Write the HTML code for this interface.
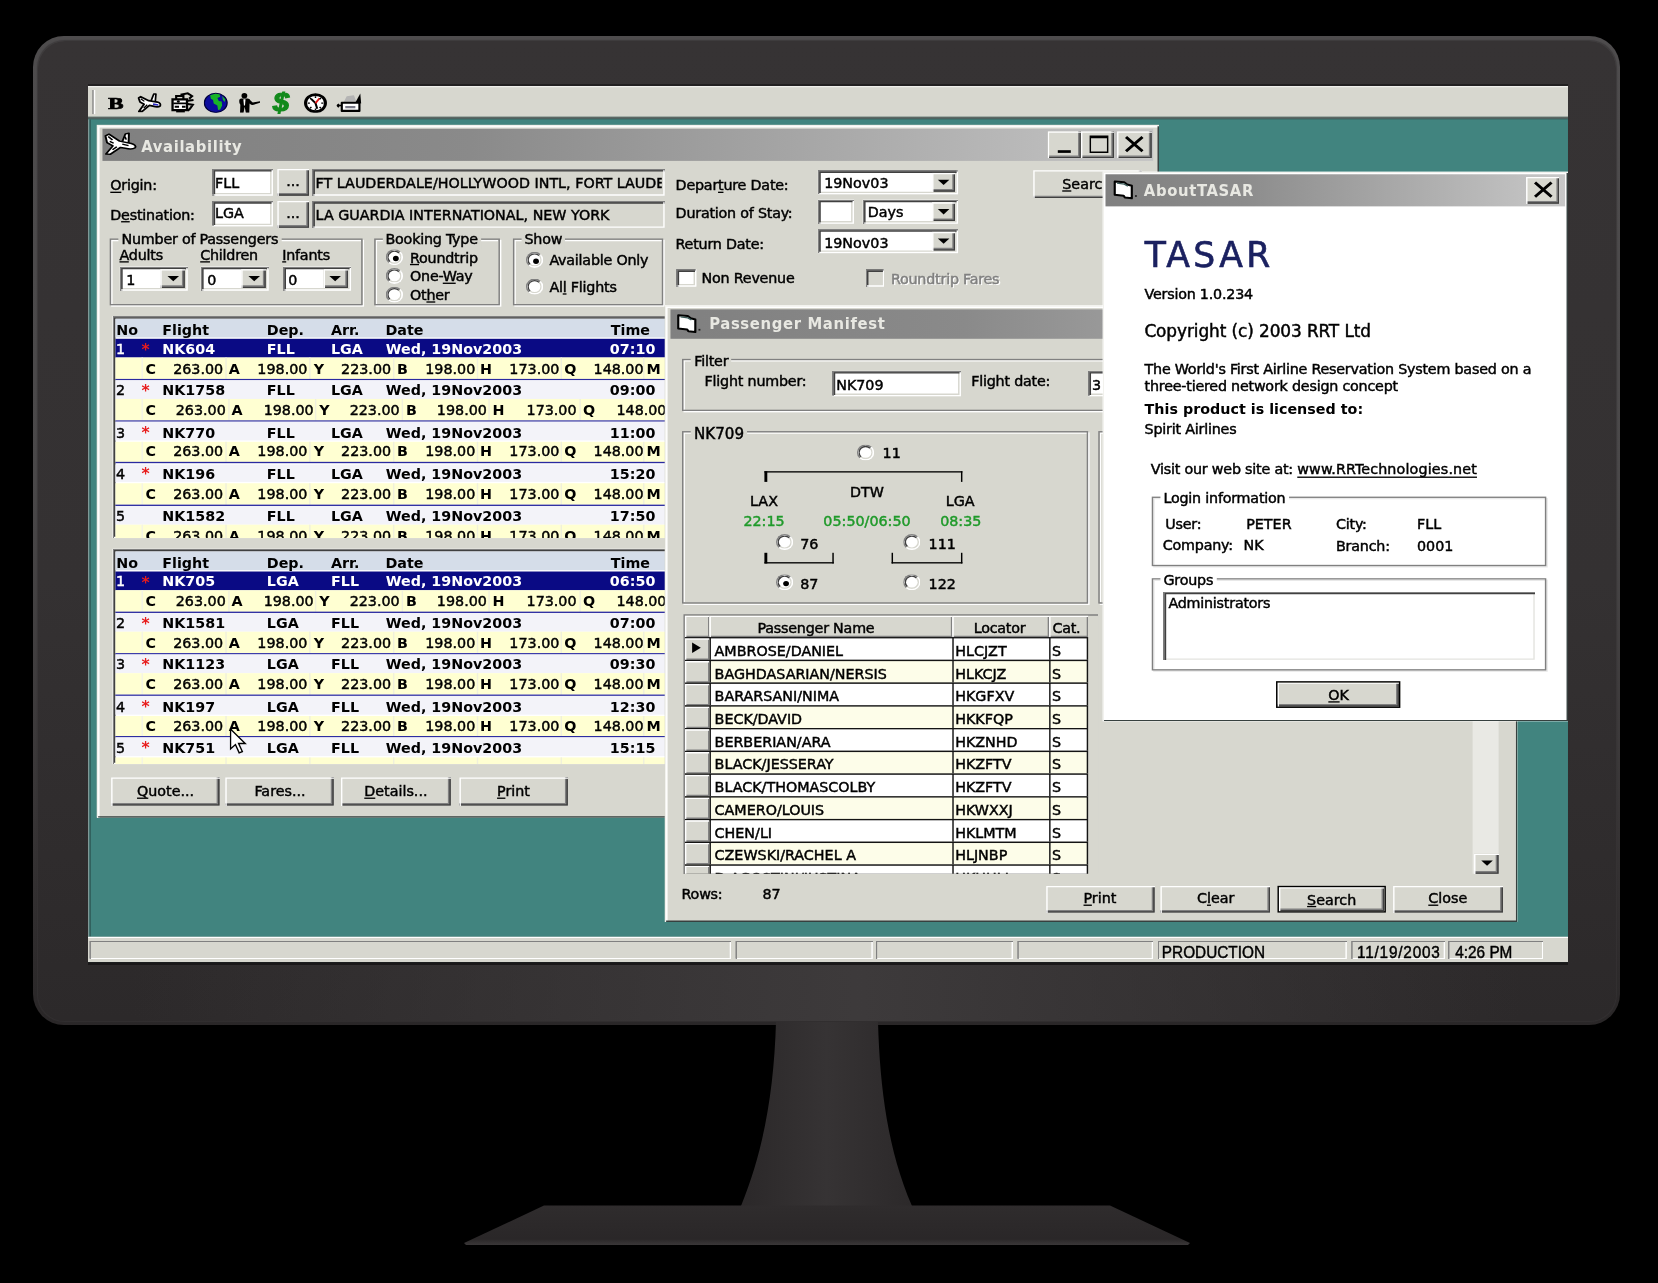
<!DOCTYPE html>
<html lang="en"><head><meta charset="utf-8"><title>TASAR</title>
<style>
html,body{margin:0;padding:0;background:#000;}
body{width:1658px;height:1283px;position:relative;overflow:hidden;font-family:"DejaVu Sans Condensed","DejaVu Sans","Liberation Sans",sans-serif;}
#rim{position:absolute;left:33px;top:36px;width:1587px;height:989px;border-radius:31px;
 background:linear-gradient(180deg,#4e4c4d 0%,#4a4849 45%,#3a3738 75%,#2a2728 100%);}
#bezel{position:absolute;left:37.5px;top:40.5px;width:1578px;height:980px;border-radius:27px;
 background:linear-gradient(180deg,#363334 0%,#343132 55%,#2c292a 100%);box-shadow:0 0 1px 0.5px rgba(54,51,52,0.7);}
#bglow{position:absolute;left:37.5px;top:962px;width:1578px;height:58.5px;border-radius:0 0 27px 27px;background:linear-gradient(90deg,rgba(60,57,58,0) 6%,rgba(60,57,58,0.55) 30%,rgba(62,59,60,0.95) 52%,rgba(60,57,58,0.55) 72%,rgba(60,57,58,0) 94%);}
#scrshadow{position:absolute;left:88px;top:83.6px;width:1480px;height:881px;background:linear-gradient(180deg,#222021 0,#222021 4px,#1a1819 4px);}
#stand{position:absolute;left:0;top:0;}
#scr{position:absolute;left:88px;top:86.4px;width:1024px;height:655px;transform:scale(1.4453,1.3375);transform-origin:0 0;overflow:hidden;background:#41847f;font-size:11px;color:#000;filter:blur(0.35px);}
#scr div{position:absolute;box-sizing:border-box;}
#scr .t{white-space:nowrap;-webkit-text-stroke:0.32px currentColor;}
#scr .btn,#scr .btnd{-webkit-text-stroke:0.32px currentColor;}
#scr .b,#scr .capt{-webkit-text-stroke:0;}
#scr u{text-decoration:underline;text-underline-offset:1px;text-decoration-thickness:1px;}
.face{background:#d7d7cf;}
.win{background:#d7d7cf;box-shadow:inset 1px 1px 0 #f2f2ee,inset -1px -1px 0 #36403f,inset 2px 2px 0 #fff;}
.btn{background:#d7d7cf;box-shadow:inset 1px 1px 0 #fff,inset -1px -1px 0 #404040,inset -2px -2px 0 #808080;text-align:center;white-space:nowrap;}
.btnd{background:#d7d7cf;border:1px solid #000;box-shadow:inset 1px 1px 0 #fff,inset -1px -1px 0 #404040,inset -2px -2px 0 #808080;text-align:center;white-space:nowrap;}
.sunk{background:#fff;box-shadow:inset 1px 1px 0 #808080,inset -1px -1px 0 #fff,inset 2px 2px 0 #404040,inset -2px -2px 0 #d7d7cf;}
.sunkf{background:#d7d7cf;box-shadow:inset 1px 1px 0 #808080,inset -1px -1px 0 #fff,inset 2px 2px 0 #404040,inset -2px -2px 0 #d7d7cf;}
.grp{border:1px solid #808080;box-shadow:1px 1px 0 #fff,inset 1px 1px 0 #fff;}
.grpw{border:1px solid #808080;box-shadow:1px 1px 0 #e8e8e8,inset 1px 1px 0 #e8e8e8;}
.lbl{background:#d7d7cf;padding:0 2px;}
.lblw{background:#fff;padding:0 2px;}
.b{font-weight:bold;}
.cap{background:linear-gradient(90deg,#808080 0%,#8a8a8a 35%,#c4c4c4 100%);}
.capt{color:#e8e8e2;font-weight:bold;font-size:11.4px;letter-spacing:0.45px;}
.radio{border-radius:50%;border:1px solid;border-color:#808080 #fff #fff #808080;background:#fff;}
.radio .ri{border-radius:50%;border:1px solid;border-color:#404040 #d7d7cf #d7d7cf #404040;background:#fff;}
.dot{border-radius:50%;background:#000;}
.arr{width:0;height:0;border-left:4px solid transparent;border-right:4px solid transparent;border-top:4.4px solid #000;}
.sp{background:#d7d7cf;box-shadow:inset 1px 1px 0 #808080,inset -1px -1px 0 #fff;}
.st{font-family:"Liberation Sans",sans-serif;font-size:11.8px;transform:scaleX(0.9);transform-origin:0 50%;}
.dis{color:#808080;text-shadow:1px 1px 0 #fff;}
.green{color:#1f9a2a;}
</style></head>
<body>
<div id="rim"></div>
<div id="bezel"></div>
<div id="bglow"></div>
<svg id="stand" width="1658" height="1283" viewBox="0 0 1658 1283">
<defs>
<linearGradient id="nk" x1="0" x2="1" y1="0" y2="0"><stop offset="0" stop-color="#2b2829"/><stop offset="0.5" stop-color="#363334"/><stop offset="1" stop-color="#2c292a"/></linearGradient>
<linearGradient id="bs" x1="0" x2="0" y1="0" y2="1"><stop offset="0" stop-color="#2f2c2d"/><stop offset="0.85" stop-color="#2a2728"/><stop offset="1" stop-color="#3a3738"/></linearGradient>
</defs>
<path d="M776,1022 L878,1022 C880,1090 888,1150 912,1206 L741,1206 C764,1150 774,1090 776,1022 Z" fill="url(#nk)"/>
<path d="M544,1205.5 L1110,1205.5 L1190,1243 L1188,1245 L466,1245 L464,1243 Z" fill="url(#bs)"/>
</svg>
<div id="scrshadow"></div>
<div id="scr">
<div class="face" style="left:0.00px;top:0.00px;width:1024.01px;height:23.03px;box-shadow:inset 0 1px 0 #eeeeea;">
</div>
<div style="left:0.00px;top:23.03px;width:1024.01px;height:2.24px;background:linear-gradient(180deg,#6a6a66,#3c5e5c);">
</div>
<div style="left:0.00px;top:25.27px;width:1.11px;height:610.24px;background:#7f9896;">
</div>
<div style="left:1.11px;top:25.27px;width:1.25px;height:610.24px;background:#2f5d5b;">
</div>
<div style="left:2.77px;top:3.44px;width:1.04px;height:17.20px;background:#808080;">
</div>
<div style="left:3.81px;top:3.44px;width:1.04px;height:17.20px;background:#fff;">
</div>
<div style="left:10.79px;top:3.89px;width:16px;height:16px;"><div class="t" style="left:3.4px;top:1px;height:16px;line-height:16px;font-family:'Liberation Serif',serif;font-weight:bold;font-size:12px;-webkit-text-stroke:0.55px #000;transform:scaleX(1.32);transform-origin:0 0;">B</div></div>
<div style="left:33.79px;top:3.89px;width:16px;height:16px;"><svg width="17" height="16" viewBox="0 0 17 16"><path d="M9.5,7.5 L11.5,2 L13,2 L12.5,8.5 Z" fill="#fff" stroke="#000" stroke-width="1.2" stroke-linejoin="round"/><path d="M1,5 L2.5,4 L8,7 L14,8 Q16.8,9 16,10.8 Q14.5,12.2 11,11 L8.5,10.5 L3.5,15 L1.2,15 L4.8,9.6 L2,8 Z" fill="#fff" stroke="#000" stroke-width="1.3" stroke-linejoin="round"/><path d="M11,9.6 L14.6,10.2" stroke="#2a2ac0" stroke-width="1.3"/><path d="M2.5,5.5 L5,7.5 M4.5,12.5 L7,10" stroke="#000" stroke-width="0.9"/></svg></div>
<div style="left:56.79px;top:3.89px;width:16px;height:16px;"><svg width="17" height="16" viewBox="0 0 17 16"><path d="M1.5,6 L11.5,6 L11.5,14 L1.5,14 Z" fill="#fff" stroke="#000" stroke-width="1.6"/><path d="M4,6 L4,3.5 L9,3.5 L9,6" fill="none" stroke="#000" stroke-width="1.5"/><path d="M7,2.5 L12,1.5 L15,3.5 L13,5.5 M12,7 L16,6.5 M12,9.5 L15.5,10 L13.5,13 L12,14.5" fill="none" stroke="#000" stroke-width="1.5"/><path d="M2,9 L11,9 M3,11.5 L6,11.5 M8,11.5 L10.5,11.5 M4,15.2 L10,15.2" stroke="#000" stroke-width="1.4"/><circle cx="5.5" cy="7.6" r="1" fill="#000"/></svg></div>
<div style="left:79.79px;top:3.89px;width:16px;height:16px;"><svg width="17" height="16" viewBox="0 0 17 16"><ellipse cx="8.4" cy="8.6" rx="7.9" ry="7.2" fill="#0c0c9c" stroke="#00003a" stroke-width="0.8"/><path d="M4.5,3 L8,1.8 L11,2.2 L11.5,4 L9.5,5 L10.5,7.2 L12.5,7.6 L12.8,10.5 L11.5,13.5 L10,14 L9.5,10.5 L7,9 L6.5,6.5 L5,5.5 Z" fill="#18b428"/><path d="M12.8,3.4 L15,6 L14.6,8 L13.4,6.4 Z" fill="#18b428"/></svg></div>
<div style="left:102.79px;top:3.89px;width:16px;height:16px;"><svg width="17" height="16" viewBox="0 0 17 16"><ellipse cx="5.2" cy="3.2" rx="2" ry="2" fill="#000"/><path d="M1.6,7 Q1.6,5.4 3.2,5.4 L7.4,5.4 Q8.8,5.4 9.6,7 L11,8.4 L16,7.4 L16,8.6 L11,10.2 Q9.8,10.2 8.8,9 L8.6,16 L6.2,16 L5.4,11.5 L4.6,16 L2.2,16 L2.4,10 Q1.6,9.4 1.6,7 Z" fill="#000"/><path d="M4.5,6 L6,6 L5.6,10.5 L4.9,10.5 Z" fill="#fff"/></svg></div>
<div style="left:125.79px;top:3.89px;width:16px;height:16px;"><div class="t" style="left:2.4px;top:-2.2px;height:22px;line-height:22px;font-family:'Liberation Sans',sans-serif;font-weight:bold;font-style:italic;font-size:18.6px;color:#128a1c;-webkit-text-stroke:0.9px #128a1c;transform:scaleX(1.08);transform-origin:0 0;">$</div></div>
<div style="left:148.79px;top:3.89px;width:16px;height:16px;"><svg width="17" height="16" viewBox="0 0 17 16"><ellipse cx="8.4" cy="8.8" rx="6.9" ry="6.4" fill="#fff" stroke="#000" stroke-width="2.1"/><path d="M8.4,8.8 L5.4,5.6 M8.4,8.8 L9.6,13" stroke="#000" stroke-width="1.4"/><path d="M8.4,8.8 L11.2,5.2" stroke="#e01818" stroke-width="1.3"/><path d="M8.4,3.6v1.4M8.4,12.8v1.4M3,8.8h1.5M12.4,8.8h1.5M4.6,5l1,0.9M12.2,5l-1,0.9M4.6,12.6l1,-0.9M12.2,12.6l-1,-0.9" stroke="#000" stroke-width="1"/></svg></div>
<div style="left:171.78px;top:3.89px;width:16px;height:16px;"><svg width="18" height="16" viewBox="0 0 18 16"><path d="M5,8 L7,3.6 L12,3 L13.6,7.6 Z" fill="#b4b4b4"/><path d="M13,8.4 L16.4,1.6 L17,9 Z" fill="#000"/><path d="M3.6,8.6 L15.8,8.6 L15.8,14.6 L3.6,14.6 Z" fill="#fff" stroke="#000" stroke-width="1.5" stroke-linejoin="round"/><path d="M0.6,10.6 L3.4,10.6 M1.6,9.4 L0.4,10.6 L1.6,11.8" stroke="#000" stroke-width="1.1" fill="none"/><path d="M6,11.8 L13,11.8" stroke="#7a7a88" stroke-width="1.6"/></svg></div>
<div class="win" style="left:6.23px;top:28.86px;width:734.80px;height:518.50px;">
</div>
<div class="cap" style="left:10.38px;top:32.45px;width:726.49px;height:23.33px;">
</div>
<div style="left:11.21px;top:34.39px;width:23px;height:18px;"><svg width="23" height="18" viewBox="0 0 17 16" preserveAspectRatio="none"><path d="M9.2,7.5 L11,1.6 L12.8,1.2 L12.6,8.5 Z" fill="#fff" stroke="#000" stroke-width="1" stroke-linejoin="round"/><path d="M0.8,3 L2.6,1.8 L8,6.4 L14,8 Q16.8,9 16,10.8 Q14.5,12.2 11,11.2 L8.5,10.6 L3.2,15.2 L1,15 L4.6,9.6 L1.6,7.4 Z" fill="#fff" stroke="#000" stroke-width="1" stroke-linejoin="round"/><path d="M2.2,3.4 L4.4,5.6 M3,6.6 L5,7.8 M4.4,12.2 L6.6,10.2 M10.8,3.4 L11.4,5.4 M9.4,8.4 L12.6,9.4" stroke="#000" stroke-width="0.9"/></svg></div>
<div class="t capt" style="left:36.81px;top:36.64px;height:16px;line-height:16px;">Availability</div>
<div class="btn" style="left:664.36px;top:34.24px;width:22.69px;height:19.44px;">
<div style="left:7px;top:13.5px;width:9px;height:2.4px;background:#000;"></div>
</div>
<div class="btn" style="left:687.33px;top:34.24px;width:22.97px;height:19.44px;">
<div style="left:5.5px;top:3px;width:13px;height:13px;border:1.2px solid #000;border-top:2.6px solid #000;"></div>
</div>
<div class="btn" style="left:712.10px;top:34.24px;width:23.66px;height:19.44px;">
<svg style="position:absolute;left:5.2px;top:3px" width="14" height="13" viewBox="0 0 14 13"><path d="M1.2,1.2 L12.6,11.8 M12.6,1.2 L1.2,11.8" stroke="#000" stroke-width="2.1"/></svg>
</div>
<div class="t" style="left:15.43px;top:67.84px;height:14px;line-height:14px;letter-spacing:-0.15px;"><u>O</u>rigin:</div>
<div class="t" style="left:15.43px;top:90.12px;height:14px;line-height:14px;letter-spacing:-0.15px;">D<u>e</u>stination:</div>
<div class="sunk" style="left:85.52px;top:62.21px;width:42.76px;height:19.44px;">
</div>
<div class="t" style="left:87.87px;top:65.90px;height:14px;line-height:14px;">FLL</div>
<div class="sunk" style="left:85.52px;top:85.98px;width:42.76px;height:19.44px;">
</div>
<div class="t" style="left:87.87px;top:89.22px;height:14px;line-height:14px;">LGA</div>
<div class="btn" style="left:130.77px;top:61.91px;width:22.28px;height:20.04px;line-height:20.84px;">
...
</div>
<div class="btn" style="left:130.77px;top:85.68px;width:22.28px;height:20.04px;line-height:20.84px;">
...
</div>
<div class="sunkf" style="left:154.99px;top:62.21px;width:243.55px;height:19.59px;">
</div>
<div style="left:156.78px;top:63.25px;width:240.09px;height:17.20px;overflow:hidden;">
<div class="t" style="left:0.69px;top:2.79px;height:14px;line-height:14px;">FT LAUDERDALE/HOLLYWOOD INTL, FORT LAUDERDALE</div>
</div>
<div class="sunkf" style="left:154.99px;top:85.98px;width:243.55px;height:19.59px;">
</div>
<div style="left:156.78px;top:87.18px;width:240.09px;height:17.20px;overflow:hidden;">
<div class="t" style="left:0.69px;top:2.35px;height:14px;line-height:14px;">LA GUARDIA INTERNATIONAL, NEW YORK</div>
</div>
<div class="grp" style="left:15.29px;top:113.79px;width:175.05px;height:49.94px;">
</div>
<div class="t lbl" style="left:21.17px;top:108.07px;height:14px;line-height:14px;letter-spacing:-0.15px;">Number of Passengers</div>
<div class="t" style="left:21.79px;top:120.03px;height:14px;line-height:14px;letter-spacing:-0.15px;"><u>A</u>dults</div>
<div class="t" style="left:77.63px;top:120.03px;height:14px;line-height:14px;letter-spacing:-0.15px;"><u>C</u>hildren</div>
<div class="t" style="left:134.37px;top:120.03px;height:14px;line-height:14px;letter-spacing:-0.15px;"><u>I</u>nfants</div>
<div class="sunk" style="left:22.42px;top:135.48px;width:46.91px;height:17.64px;">
<div class="t" style="left:4px;top:2.3px;height:15.64px;line-height:15.64px;">1</div>
<div class="btn" style="left:27.96px;top:2px;width:16.95px;height:13.64px;"><div class="arr" style="left:4.48px;top:4.82px;"></div></div>
</div>
<div class="sunk" style="left:78.46px;top:135.48px;width:46.91px;height:17.64px;">
<div class="t" style="left:4px;top:2.3px;height:15.64px;line-height:15.64px;">0</div>
<div class="btn" style="left:27.96px;top:2px;width:16.95px;height:13.64px;"><div class="arr" style="left:4.48px;top:4.82px;"></div></div>
</div>
<div class="sunk" style="left:134.64px;top:135.48px;width:46.91px;height:17.64px;">
<div class="t" style="left:4px;top:2.3px;height:15.64px;line-height:15.64px;">0</div>
<div class="btn" style="left:27.96px;top:2px;width:16.95px;height:13.64px;"><div class="arr" style="left:4.48px;top:4.82px;"></div></div>
</div>
<div class="grp" style="left:197.54px;top:113.79px;width:87.80px;height:49.94px;">
</div>
<div class="t lbl" style="left:203.83px;top:108.07px;height:14px;line-height:14px;letter-spacing:-0.15px;">Booking Type</div>
<div class="radio " style="left:206.00px;top:121.55px;width:12px;height:12px;"><div class="ri" style="left:0;top:0;width:10px;height:10px;"><div class="dot" style="left:3px;top:3px;width:4px;height:4px;"></div></div></div>
<div class="radio " style="left:206.00px;top:135.61px;width:12px;height:12px;"><div class="ri" style="left:0;top:0;width:10px;height:10px;"></div></div>
<div class="radio " style="left:206.00px;top:149.66px;width:12px;height:12px;"><div class="ri" style="left:0;top:0;width:10px;height:10px;"></div></div>
<div class="t" style="left:222.79px;top:121.67px;height:14px;line-height:14px;letter-spacing:-0.15px;"><u>R</u>oundtrip</div>
<div class="t" style="left:222.79px;top:135.73px;height:14px;line-height:14px;letter-spacing:-0.15px;">One-<u>W</u>ay</div>
<div class="t" style="left:222.79px;top:149.79px;height:14px;line-height:14px;letter-spacing:-0.15px;">Ot<u>h</u>er</div>
<div class="grp" style="left:293.78px;top:113.79px;width:104.61px;height:49.94px;">
</div>
<div class="t lbl" style="left:300.01px;top:108.07px;height:14px;line-height:14px;letter-spacing:-0.15px;">Show</div>
<div class="radio " style="left:302.86px;top:124.24px;width:12px;height:12px;"><div class="ri" style="left:0;top:0;width:10px;height:10px;"><div class="dot" style="left:3px;top:3px;width:4px;height:4px;"></div></div></div>
<div class="radio " style="left:302.86px;top:144.13px;width:12px;height:12px;"><div class="ri" style="left:0;top:0;width:10px;height:10px;"></div></div>
<div class="t" style="left:319.24px;top:124.07px;height:14px;line-height:14px;letter-spacing:-0.15px;">Available Only</div>
<div class="t" style="left:319.24px;top:143.95px;height:14px;line-height:14px;letter-spacing:-0.15px;">Al<u>l</u> Flights</div>
<div class="t" style="left:406.56px;top:67.84px;height:14px;line-height:14px;letter-spacing:-0.15px;">Depar<u>t</u>ure Date:</div>
<div class="t" style="left:406.56px;top:89.37px;height:14px;line-height:14px;letter-spacing:-0.15px;">Duration of Stay:</div>
<div class="t" style="left:406.56px;top:111.65px;height:14px;line-height:14px;letter-spacing:-0.15px;">Return Date:</div>
<div class="sunk" style="left:505.36px;top:62.65px;width:96.59px;height:18.09px;">
<div class="t" style="left:4px;top:2.3px;height:16.09px;line-height:16.09px;">19Nov03</div>
<div class="btn" style="left:78.68px;top:2px;width:15.91px;height:14.09px;"><div class="arr" style="left:3.96px;top:5.05px;"></div></div>
</div>
<div class="sunk" style="left:505.36px;top:84.93px;width:24.22px;height:17.94px;">
</div>
<div class="sunk" style="left:535.53px;top:84.93px;width:66.42px;height:17.94px;">
<div class="t" style="left:4px;top:2.3px;height:15.94px;line-height:15.94px;">Days</div>
<div class="btn" style="left:48.51px;top:2px;width:15.91px;height:13.94px;"><div class="arr" style="left:3.96px;top:4.97px;"></div></div>
</div>
<div class="sunk" style="left:505.36px;top:107.21px;width:96.59px;height:18.09px;">
<div class="t" style="left:4px;top:2.3px;height:16.09px;line-height:16.09px;">19Nov03</div>
<div class="btn" style="left:78.68px;top:2px;width:15.91px;height:14.09px;"><div class="arr" style="left:3.96px;top:5.05px;"></div></div>
</div>
<div class="sunk" style="left:407.39px;top:136.82px;width:13.15px;height:13.01px;">
</div>
<div class="t" style="left:424.55px;top:137.37px;height:14px;line-height:14px;letter-spacing:-0.15px;">Non Revenue</div>
<div class="sunkf" style="left:538.30px;top:136.82px;width:13.15px;height:13.01px;">
</div>
<div class="t dis" style="left:555.59px;top:137.52px;height:14px;line-height:14px;letter-spacing:-0.15px;">Roundtrip Fares</div>
<div class="btn" style="left:653.57px;top:62.50px;width:75.00px;height:21.08px;line-height:21.88px;">
<u>S</u>earch
</div>
<div class="sunk" style="left:17.16px;top:172.11px;width:648.45px;height:165.83px;overflow:hidden;">
<div style="left:2.01px;top:2.17px;width:691.90px;height:14.21px;background:#d5dde9;">
</div>
<div class="t b" style="left:2.35px;top:3.99px;height:14px;line-height:14px;">No</div>
<div class="t b" style="left:34.25px;top:3.99px;height:14px;line-height:14px;">Flight</div>
<div class="t b" style="left:106.55px;top:3.99px;height:14px;line-height:14px;">Dep.</div>
<div class="t b" style="left:150.97px;top:3.99px;height:14px;line-height:14px;">Arr.</div>
<div class="t b" style="left:188.68px;top:3.99px;height:14px;line-height:14px;">Date</div>
<div class="t b" style="left:344.57px;top:3.99px;height:14px;line-height:14px;">Time</div>
<div style="left:2.01px;top:16.82px;width:691.90px;height:13.91px;background:#0a0a84;">
</div>
<div class="t" style="left:2.21px;top:18.12px;height:14px;line-height:14px;color:#fff;">1</div>
<div class="t b" style="left:19.93px;top:17.67px;height:14px;line-height:14px;color:#e81c1c;font-size:12px;">*</div>
<div class="t b" style="left:34.25px;top:18.12px;height:14px;line-height:14px;color:#fff;">NK604</div>
<div class="t b" style="left:106.55px;top:18.12px;height:14px;line-height:14px;color:#fff;">FLL</div>
<div class="t b" style="left:150.97px;top:18.12px;height:14px;line-height:14px;color:#fff;">LGA</div>
<div class="t b" style="left:188.89px;top:18.12px;height:14px;line-height:14px;color:#fff;">Wed, 19Nov2003</div>
<div class="t b" style="left:75.42px;width:300px;text-align:right;top:18.12px;height:14px;line-height:14px;color:#fff;">07:10</div>
<div style="left:2.01px;top:31.18px;width:691.90px;height:15.72px;background:#ffffd2;">
</div>
<div style="left:19.72px;top:31.18px;width:0.90px;height:15.72px;background:#f4f4e6;">
</div>
<div style="left:77.56px;top:31.18px;width:0.83px;height:15.72px;background:#f0f0dc;">
</div>
<div style="left:136.30px;top:31.18px;width:0.83px;height:15.72px;background:#f0f0dc;">
</div>
<div style="left:194.01px;top:31.18px;width:0.83px;height:15.72px;background:#f0f0dc;">
</div>
<div style="left:251.44px;top:31.18px;width:0.83px;height:15.72px;background:#f0f0dc;">
</div>
<div style="left:309.69px;top:31.18px;width:0.83px;height:15.72px;background:#f0f0dc;">
</div>
<div style="left:366.64px;top:31.18px;width:0.83px;height:15.72px;background:#f0f0dc;">
</div>
<div class="t b" style="left:22.56px;top:32.93px;height:14px;line-height:14px;">C</div>
<div class="t" style="left:-223.61px;width:300px;text-align:right;top:32.93px;height:14px;line-height:14px;">263.00</div>
<div class="t b" style="left:80.26px;top:32.93px;height:14px;line-height:14px;">A</div>
<div class="t" style="left:-165.36px;width:300px;text-align:right;top:32.93px;height:14px;line-height:14px;">198.00</div>
<div class="t b" style="left:139.00px;top:32.93px;height:14px;line-height:14px;">Y</div>
<div class="t" style="left:-107.44px;width:300px;text-align:right;top:32.93px;height:14px;line-height:14px;">223.00</div>
<div class="t b" style="left:196.71px;top:32.93px;height:14px;line-height:14px;">B</div>
<div class="t" style="left:-49.19px;width:300px;text-align:right;top:32.93px;height:14px;line-height:14px;">198.00</div>
<div class="t b" style="left:254.13px;top:32.93px;height:14px;line-height:14px;">H</div>
<div class="t" style="left:9.00px;width:300px;text-align:right;top:32.93px;height:14px;line-height:14px;">173.00</div>
<div class="t b" style="left:312.39px;top:32.93px;height:14px;line-height:14px;">Q</div>
<div class="t" style="left:67.26px;width:300px;text-align:right;top:32.93px;height:14px;line-height:14px;">148.00</div>
<div class="t b" style="left:369.34px;top:32.93px;height:14px;line-height:14px;">M</div>
<div class="t" style="left:124.96px;width:300px;text-align:right;top:32.93px;height:14px;line-height:14px;">148.00</div>
<div style="left:2.01px;top:46.89px;width:691.90px;height:0.97px;background:#2a2aa0;">
</div>
<div style="left:2.01px;top:48.01px;width:691.90px;height:13.91px;background:#f3f3f9;">
</div>
<div class="t" style="left:2.21px;top:49.31px;height:14px;line-height:14px;">2</div>
<div class="t b" style="left:19.93px;top:48.87px;height:14px;line-height:14px;color:#e81c1c;font-size:12px;">*</div>
<div class="t b" style="left:34.25px;top:49.31px;height:14px;line-height:14px;">NK1758</div>
<div class="t b" style="left:106.55px;top:49.31px;height:14px;line-height:14px;">FLL</div>
<div class="t b" style="left:150.97px;top:49.31px;height:14px;line-height:14px;">LGA</div>
<div class="t b" style="left:188.89px;top:49.31px;height:14px;line-height:14px;">Wed, 19Nov2003</div>
<div class="t b" style="left:75.42px;width:300px;text-align:right;top:49.31px;height:14px;line-height:14px;">09:00</div>
<div style="left:2.01px;top:62.37px;width:691.90px;height:15.72px;background:#ffffd2;">
</div>
<div style="left:19.72px;top:62.37px;width:0.90px;height:15.72px;background:#f4f4e6;">
</div>
<div style="left:79.43px;top:62.37px;width:0.83px;height:15.72px;background:#f0f0dc;">
</div>
<div style="left:140.18px;top:62.37px;width:0.83px;height:15.72px;background:#f0f0dc;">
</div>
<div style="left:200.24px;top:62.37px;width:0.83px;height:15.72px;background:#f0f0dc;">
</div>
<div style="left:260.02px;top:62.37px;width:0.83px;height:15.72px;background:#f0f0dc;">
</div>
<div style="left:322.63px;top:62.37px;width:0.83px;height:15.72px;background:#f0f0dc;">
</div>
<div style="left:383.52px;top:62.37px;width:0.83px;height:15.72px;background:#f0f0dc;">
</div>
<div class="t b" style="left:22.56px;top:64.13px;height:14px;line-height:14px;">C</div>
<div class="t" style="left:-221.82px;width:300px;text-align:right;top:64.13px;height:14px;line-height:14px;">263.00</div>
<div class="t b" style="left:82.13px;top:64.13px;height:14px;line-height:14px;">A</div>
<div class="t" style="left:-161.00px;width:300px;text-align:right;top:64.13px;height:14px;line-height:14px;">198.00</div>
<div class="t b" style="left:142.88px;top:64.13px;height:14px;line-height:14px;">Y</div>
<div class="t" style="left:-101.49px;width:300px;text-align:right;top:64.13px;height:14px;line-height:14px;">223.00</div>
<div class="t b" style="left:202.93px;top:64.13px;height:14px;line-height:14px;">B</div>
<div class="t" style="left:-41.16px;width:300px;text-align:right;top:64.13px;height:14px;line-height:14px;">198.00</div>
<div class="t b" style="left:262.71px;top:64.13px;height:14px;line-height:14px;">H</div>
<div class="t" style="left:20.90px;width:300px;text-align:right;top:64.13px;height:14px;line-height:14px;">173.00</div>
<div class="t b" style="left:325.33px;top:64.13px;height:14px;line-height:14px;">Q</div>
<div class="t" style="left:83.10px;width:300px;text-align:right;top:64.13px;height:14px;line-height:14px;">148.00</div>
<div class="t b" style="left:386.22px;top:64.13px;height:14px;line-height:14px;">M</div>
<div class="t" style="left:144.34px;width:300px;text-align:right;top:64.13px;height:14px;line-height:14px;">148.00</div>
<div style="left:2.01px;top:78.09px;width:691.90px;height:0.97px;background:#2a2aa0;">
</div>
<div style="left:2.01px;top:79.21px;width:691.90px;height:13.91px;background:#f3f3f9;">
</div>
<div class="t" style="left:2.21px;top:80.51px;height:14px;line-height:14px;">3</div>
<div class="t b" style="left:19.93px;top:80.06px;height:14px;line-height:14px;color:#e81c1c;font-size:12px;">*</div>
<div class="t b" style="left:34.25px;top:80.51px;height:14px;line-height:14px;">NK770</div>
<div class="t b" style="left:106.55px;top:80.51px;height:14px;line-height:14px;">FLL</div>
<div class="t b" style="left:150.97px;top:80.51px;height:14px;line-height:14px;">LGA</div>
<div class="t b" style="left:188.89px;top:80.51px;height:14px;line-height:14px;">Wed, 19Nov2003</div>
<div class="t b" style="left:75.42px;width:300px;text-align:right;top:80.51px;height:14px;line-height:14px;">11:00</div>
<div style="left:2.01px;top:93.56px;width:691.90px;height:15.72px;background:#ffffd2;">
</div>
<div style="left:19.72px;top:93.56px;width:0.90px;height:15.72px;background:#f4f4e6;">
</div>
<div style="left:77.56px;top:93.56px;width:0.83px;height:15.72px;background:#f0f0dc;">
</div>
<div style="left:136.30px;top:93.56px;width:0.83px;height:15.72px;background:#f0f0dc;">
</div>
<div style="left:194.01px;top:93.56px;width:0.83px;height:15.72px;background:#f0f0dc;">
</div>
<div style="left:251.44px;top:93.56px;width:0.83px;height:15.72px;background:#f0f0dc;">
</div>
<div style="left:309.69px;top:93.56px;width:0.83px;height:15.72px;background:#f0f0dc;">
</div>
<div style="left:366.64px;top:93.56px;width:0.83px;height:15.72px;background:#f0f0dc;">
</div>
<div class="t b" style="left:22.56px;top:95.32px;height:14px;line-height:14px;">C</div>
<div class="t" style="left:-223.61px;width:300px;text-align:right;top:95.32px;height:14px;line-height:14px;">263.00</div>
<div class="t b" style="left:80.26px;top:95.32px;height:14px;line-height:14px;">A</div>
<div class="t" style="left:-165.36px;width:300px;text-align:right;top:95.32px;height:14px;line-height:14px;">198.00</div>
<div class="t b" style="left:139.00px;top:95.32px;height:14px;line-height:14px;">Y</div>
<div class="t" style="left:-107.44px;width:300px;text-align:right;top:95.32px;height:14px;line-height:14px;">223.00</div>
<div class="t b" style="left:196.71px;top:95.32px;height:14px;line-height:14px;">B</div>
<div class="t" style="left:-49.19px;width:300px;text-align:right;top:95.32px;height:14px;line-height:14px;">198.00</div>
<div class="t b" style="left:254.13px;top:95.32px;height:14px;line-height:14px;">H</div>
<div class="t" style="left:9.00px;width:300px;text-align:right;top:95.32px;height:14px;line-height:14px;">173.00</div>
<div class="t b" style="left:312.39px;top:95.32px;height:14px;line-height:14px;">Q</div>
<div class="t" style="left:67.26px;width:300px;text-align:right;top:95.32px;height:14px;line-height:14px;">148.00</div>
<div class="t b" style="left:369.34px;top:95.32px;height:14px;line-height:14px;">M</div>
<div class="t" style="left:124.96px;width:300px;text-align:right;top:95.32px;height:14px;line-height:14px;">148.00</div>
<div style="left:2.01px;top:109.28px;width:691.90px;height:0.97px;background:#2a2aa0;">
</div>
<div style="left:2.01px;top:110.40px;width:691.90px;height:13.91px;background:#f3f3f9;">
</div>
<div class="t" style="left:2.21px;top:111.70px;height:14px;line-height:14px;">4</div>
<div class="t b" style="left:19.93px;top:111.25px;height:14px;line-height:14px;color:#e81c1c;font-size:12px;">*</div>
<div class="t b" style="left:34.25px;top:111.70px;height:14px;line-height:14px;">NK196</div>
<div class="t b" style="left:106.55px;top:111.70px;height:14px;line-height:14px;">FLL</div>
<div class="t b" style="left:150.97px;top:111.70px;height:14px;line-height:14px;">LGA</div>
<div class="t b" style="left:188.89px;top:111.70px;height:14px;line-height:14px;">Wed, 19Nov2003</div>
<div class="t b" style="left:75.42px;width:300px;text-align:right;top:111.70px;height:14px;line-height:14px;">15:20</div>
<div style="left:2.01px;top:124.76px;width:691.90px;height:15.72px;background:#ffffd2;">
</div>
<div style="left:19.72px;top:124.76px;width:0.90px;height:15.72px;background:#f4f4e6;">
</div>
<div style="left:77.56px;top:124.76px;width:0.83px;height:15.72px;background:#f0f0dc;">
</div>
<div style="left:136.30px;top:124.76px;width:0.83px;height:15.72px;background:#f0f0dc;">
</div>
<div style="left:194.01px;top:124.76px;width:0.83px;height:15.72px;background:#f0f0dc;">
</div>
<div style="left:251.44px;top:124.76px;width:0.83px;height:15.72px;background:#f0f0dc;">
</div>
<div style="left:309.69px;top:124.76px;width:0.83px;height:15.72px;background:#f0f0dc;">
</div>
<div style="left:366.64px;top:124.76px;width:0.83px;height:15.72px;background:#f0f0dc;">
</div>
<div class="t b" style="left:22.56px;top:126.51px;height:14px;line-height:14px;">C</div>
<div class="t" style="left:-223.61px;width:300px;text-align:right;top:126.51px;height:14px;line-height:14px;">263.00</div>
<div class="t b" style="left:80.26px;top:126.51px;height:14px;line-height:14px;">A</div>
<div class="t" style="left:-165.36px;width:300px;text-align:right;top:126.51px;height:14px;line-height:14px;">198.00</div>
<div class="t b" style="left:139.00px;top:126.51px;height:14px;line-height:14px;">Y</div>
<div class="t" style="left:-107.44px;width:300px;text-align:right;top:126.51px;height:14px;line-height:14px;">223.00</div>
<div class="t b" style="left:196.71px;top:126.51px;height:14px;line-height:14px;">B</div>
<div class="t" style="left:-49.19px;width:300px;text-align:right;top:126.51px;height:14px;line-height:14px;">198.00</div>
<div class="t b" style="left:254.13px;top:126.51px;height:14px;line-height:14px;">H</div>
<div class="t" style="left:9.00px;width:300px;text-align:right;top:126.51px;height:14px;line-height:14px;">173.00</div>
<div class="t b" style="left:312.39px;top:126.51px;height:14px;line-height:14px;">Q</div>
<div class="t" style="left:67.26px;width:300px;text-align:right;top:126.51px;height:14px;line-height:14px;">148.00</div>
<div class="t b" style="left:369.34px;top:126.51px;height:14px;line-height:14px;">M</div>
<div class="t" style="left:124.96px;width:300px;text-align:right;top:126.51px;height:14px;line-height:14px;">148.00</div>
<div style="left:2.01px;top:140.47px;width:691.90px;height:0.97px;background:#2a2aa0;">
</div>
<div style="left:2.01px;top:141.59px;width:691.90px;height:13.91px;background:#f3f3f9;">
</div>
<div class="t" style="left:2.21px;top:142.89px;height:14px;line-height:14px;">5</div>
<div class="t b" style="left:34.25px;top:142.89px;height:14px;line-height:14px;">NK1582</div>
<div class="t b" style="left:106.55px;top:142.89px;height:14px;line-height:14px;">FLL</div>
<div class="t b" style="left:150.97px;top:142.89px;height:14px;line-height:14px;">LGA</div>
<div class="t b" style="left:188.89px;top:142.89px;height:14px;line-height:14px;">Wed, 19Nov2003</div>
<div class="t b" style="left:75.42px;width:300px;text-align:right;top:142.89px;height:14px;line-height:14px;">17:50</div>
<div style="left:2.01px;top:155.95px;width:691.90px;height:15.72px;background:#ffffd2;">
</div>
<div style="left:19.72px;top:155.95px;width:0.90px;height:15.72px;background:#f4f4e6;">
</div>
<div style="left:77.56px;top:155.95px;width:0.83px;height:15.72px;background:#f0f0dc;">
</div>
<div style="left:136.30px;top:155.95px;width:0.83px;height:15.72px;background:#f0f0dc;">
</div>
<div style="left:194.01px;top:155.95px;width:0.83px;height:15.72px;background:#f0f0dc;">
</div>
<div style="left:251.44px;top:155.95px;width:0.83px;height:15.72px;background:#f0f0dc;">
</div>
<div style="left:309.69px;top:155.95px;width:0.83px;height:15.72px;background:#f0f0dc;">
</div>
<div style="left:366.64px;top:155.95px;width:0.83px;height:15.72px;background:#f0f0dc;">
</div>
<div class="t b" style="left:22.56px;top:157.70px;height:14px;line-height:14px;">C</div>
<div class="t" style="left:-223.61px;width:300px;text-align:right;top:157.70px;height:14px;line-height:14px;">263.00</div>
<div class="t b" style="left:80.26px;top:157.70px;height:14px;line-height:14px;">A</div>
<div class="t" style="left:-165.36px;width:300px;text-align:right;top:157.70px;height:14px;line-height:14px;">198.00</div>
<div class="t b" style="left:139.00px;top:157.70px;height:14px;line-height:14px;">Y</div>
<div class="t" style="left:-107.44px;width:300px;text-align:right;top:157.70px;height:14px;line-height:14px;">223.00</div>
<div class="t b" style="left:196.71px;top:157.70px;height:14px;line-height:14px;">B</div>
<div class="t" style="left:-49.19px;width:300px;text-align:right;top:157.70px;height:14px;line-height:14px;">198.00</div>
<div class="t b" style="left:254.13px;top:157.70px;height:14px;line-height:14px;">H</div>
<div class="t" style="left:9.00px;width:300px;text-align:right;top:157.70px;height:14px;line-height:14px;">173.00</div>
<div class="t b" style="left:312.39px;top:157.70px;height:14px;line-height:14px;">Q</div>
<div class="t" style="left:67.26px;width:300px;text-align:right;top:157.70px;height:14px;line-height:14px;">148.00</div>
<div class="t b" style="left:369.34px;top:157.70px;height:14px;line-height:14px;">M</div>
<div class="t" style="left:124.96px;width:300px;text-align:right;top:157.70px;height:14px;line-height:14px;">148.00</div>
<div style="left:2.01px;top:171.66px;width:691.90px;height:0.97px;background:#2a2aa0;">
</div>
</div>
<div class="sunk" style="left:17.16px;top:345.87px;width:648.45px;height:161.20px;overflow:hidden;">
<div style="left:2.01px;top:2.17px;width:691.90px;height:14.21px;background:#d5dde9;">
</div>
<div class="t b" style="left:2.35px;top:3.99px;height:14px;line-height:14px;">No</div>
<div class="t b" style="left:34.25px;top:3.99px;height:14px;line-height:14px;">Flight</div>
<div class="t b" style="left:106.55px;top:3.99px;height:14px;line-height:14px;">Dep.</div>
<div class="t b" style="left:150.97px;top:3.99px;height:14px;line-height:14px;">Arr.</div>
<div class="t b" style="left:188.68px;top:3.99px;height:14px;line-height:14px;">Date</div>
<div class="t b" style="left:344.57px;top:3.99px;height:14px;line-height:14px;">Time</div>
<div style="left:2.01px;top:16.82px;width:691.90px;height:13.91px;background:#0a0a84;">
</div>
<div class="t" style="left:2.21px;top:18.12px;height:14px;line-height:14px;color:#fff;">1</div>
<div class="t b" style="left:19.93px;top:17.67px;height:14px;line-height:14px;color:#e81c1c;font-size:12px;">*</div>
<div class="t b" style="left:34.25px;top:18.12px;height:14px;line-height:14px;color:#fff;">NK705</div>
<div class="t b" style="left:106.55px;top:18.12px;height:14px;line-height:14px;color:#fff;">LGA</div>
<div class="t b" style="left:150.97px;top:18.12px;height:14px;line-height:14px;color:#fff;">FLL</div>
<div class="t b" style="left:188.89px;top:18.12px;height:14px;line-height:14px;color:#fff;">Wed, 19Nov2003</div>
<div class="t b" style="left:75.42px;width:300px;text-align:right;top:18.12px;height:14px;line-height:14px;color:#fff;">06:50</div>
<div style="left:2.01px;top:31.18px;width:691.90px;height:15.72px;background:#ffffd2;">
</div>
<div style="left:19.72px;top:31.18px;width:0.90px;height:15.72px;background:#f4f4e6;">
</div>
<div style="left:79.43px;top:31.18px;width:0.83px;height:15.72px;background:#f0f0dc;">
</div>
<div style="left:140.18px;top:31.18px;width:0.83px;height:15.72px;background:#f0f0dc;">
</div>
<div style="left:200.24px;top:31.18px;width:0.83px;height:15.72px;background:#f0f0dc;">
</div>
<div style="left:260.02px;top:31.18px;width:0.83px;height:15.72px;background:#f0f0dc;">
</div>
<div style="left:322.63px;top:31.18px;width:0.83px;height:15.72px;background:#f0f0dc;">
</div>
<div style="left:383.52px;top:31.18px;width:0.83px;height:15.72px;background:#f0f0dc;">
</div>
<div class="t b" style="left:22.56px;top:32.93px;height:14px;line-height:14px;">C</div>
<div class="t" style="left:-221.82px;width:300px;text-align:right;top:32.93px;height:14px;line-height:14px;">263.00</div>
<div class="t b" style="left:82.13px;top:32.93px;height:14px;line-height:14px;">A</div>
<div class="t" style="left:-161.00px;width:300px;text-align:right;top:32.93px;height:14px;line-height:14px;">198.00</div>
<div class="t b" style="left:142.88px;top:32.93px;height:14px;line-height:14px;">Y</div>
<div class="t" style="left:-101.49px;width:300px;text-align:right;top:32.93px;height:14px;line-height:14px;">223.00</div>
<div class="t b" style="left:202.93px;top:32.93px;height:14px;line-height:14px;">B</div>
<div class="t" style="left:-41.16px;width:300px;text-align:right;top:32.93px;height:14px;line-height:14px;">198.00</div>
<div class="t b" style="left:262.71px;top:32.93px;height:14px;line-height:14px;">H</div>
<div class="t" style="left:20.90px;width:300px;text-align:right;top:32.93px;height:14px;line-height:14px;">173.00</div>
<div class="t b" style="left:325.33px;top:32.93px;height:14px;line-height:14px;">Q</div>
<div class="t" style="left:83.10px;width:300px;text-align:right;top:32.93px;height:14px;line-height:14px;">148.00</div>
<div class="t b" style="left:386.22px;top:32.93px;height:14px;line-height:14px;">M</div>
<div class="t" style="left:144.34px;width:300px;text-align:right;top:32.93px;height:14px;line-height:14px;">148.00</div>
<div style="left:2.01px;top:46.89px;width:691.90px;height:0.97px;background:#2a2aa0;">
</div>
<div style="left:2.01px;top:48.01px;width:691.90px;height:13.91px;background:#f3f3f9;">
</div>
<div class="t" style="left:2.21px;top:49.31px;height:14px;line-height:14px;">2</div>
<div class="t b" style="left:19.93px;top:48.87px;height:14px;line-height:14px;color:#e81c1c;font-size:12px;">*</div>
<div class="t b" style="left:34.25px;top:49.31px;height:14px;line-height:14px;">NK1581</div>
<div class="t b" style="left:106.55px;top:49.31px;height:14px;line-height:14px;">LGA</div>
<div class="t b" style="left:150.97px;top:49.31px;height:14px;line-height:14px;">FLL</div>
<div class="t b" style="left:188.89px;top:49.31px;height:14px;line-height:14px;">Wed, 19Nov2003</div>
<div class="t b" style="left:75.42px;width:300px;text-align:right;top:49.31px;height:14px;line-height:14px;">07:00</div>
<div style="left:2.01px;top:62.37px;width:691.90px;height:15.72px;background:#ffffd2;">
</div>
<div style="left:19.72px;top:62.37px;width:0.90px;height:15.72px;background:#f4f4e6;">
</div>
<div style="left:77.56px;top:62.37px;width:0.83px;height:15.72px;background:#f0f0dc;">
</div>
<div style="left:136.30px;top:62.37px;width:0.83px;height:15.72px;background:#f0f0dc;">
</div>
<div style="left:194.01px;top:62.37px;width:0.83px;height:15.72px;background:#f0f0dc;">
</div>
<div style="left:251.44px;top:62.37px;width:0.83px;height:15.72px;background:#f0f0dc;">
</div>
<div style="left:309.69px;top:62.37px;width:0.83px;height:15.72px;background:#f0f0dc;">
</div>
<div style="left:366.64px;top:62.37px;width:0.83px;height:15.72px;background:#f0f0dc;">
</div>
<div class="t b" style="left:22.56px;top:64.13px;height:14px;line-height:14px;">C</div>
<div class="t" style="left:-223.61px;width:300px;text-align:right;top:64.13px;height:14px;line-height:14px;">263.00</div>
<div class="t b" style="left:80.26px;top:64.13px;height:14px;line-height:14px;">A</div>
<div class="t" style="left:-165.36px;width:300px;text-align:right;top:64.13px;height:14px;line-height:14px;">198.00</div>
<div class="t b" style="left:139.00px;top:64.13px;height:14px;line-height:14px;">Y</div>
<div class="t" style="left:-107.44px;width:300px;text-align:right;top:64.13px;height:14px;line-height:14px;">223.00</div>
<div class="t b" style="left:196.71px;top:64.13px;height:14px;line-height:14px;">B</div>
<div class="t" style="left:-49.19px;width:300px;text-align:right;top:64.13px;height:14px;line-height:14px;">198.00</div>
<div class="t b" style="left:254.13px;top:64.13px;height:14px;line-height:14px;">H</div>
<div class="t" style="left:9.00px;width:300px;text-align:right;top:64.13px;height:14px;line-height:14px;">173.00</div>
<div class="t b" style="left:312.39px;top:64.13px;height:14px;line-height:14px;">Q</div>
<div class="t" style="left:67.26px;width:300px;text-align:right;top:64.13px;height:14px;line-height:14px;">148.00</div>
<div class="t b" style="left:369.34px;top:64.13px;height:14px;line-height:14px;">M</div>
<div class="t" style="left:124.96px;width:300px;text-align:right;top:64.13px;height:14px;line-height:14px;">148.00</div>
<div style="left:2.01px;top:78.09px;width:691.90px;height:0.97px;background:#2a2aa0;">
</div>
<div style="left:2.01px;top:79.21px;width:691.90px;height:13.91px;background:#f3f3f9;">
</div>
<div class="t" style="left:2.21px;top:80.51px;height:14px;line-height:14px;">3</div>
<div class="t b" style="left:19.93px;top:80.06px;height:14px;line-height:14px;color:#e81c1c;font-size:12px;">*</div>
<div class="t b" style="left:34.25px;top:80.51px;height:14px;line-height:14px;">NK1123</div>
<div class="t b" style="left:106.55px;top:80.51px;height:14px;line-height:14px;">LGA</div>
<div class="t b" style="left:150.97px;top:80.51px;height:14px;line-height:14px;">FLL</div>
<div class="t b" style="left:188.89px;top:80.51px;height:14px;line-height:14px;">Wed, 19Nov2003</div>
<div class="t b" style="left:75.42px;width:300px;text-align:right;top:80.51px;height:14px;line-height:14px;">09:30</div>
<div style="left:2.01px;top:93.56px;width:691.90px;height:15.72px;background:#ffffd2;">
</div>
<div style="left:19.72px;top:93.56px;width:0.90px;height:15.72px;background:#f4f4e6;">
</div>
<div style="left:77.56px;top:93.56px;width:0.83px;height:15.72px;background:#f0f0dc;">
</div>
<div style="left:136.30px;top:93.56px;width:0.83px;height:15.72px;background:#f0f0dc;">
</div>
<div style="left:194.01px;top:93.56px;width:0.83px;height:15.72px;background:#f0f0dc;">
</div>
<div style="left:251.44px;top:93.56px;width:0.83px;height:15.72px;background:#f0f0dc;">
</div>
<div style="left:309.69px;top:93.56px;width:0.83px;height:15.72px;background:#f0f0dc;">
</div>
<div style="left:366.64px;top:93.56px;width:0.83px;height:15.72px;background:#f0f0dc;">
</div>
<div class="t b" style="left:22.56px;top:95.32px;height:14px;line-height:14px;">C</div>
<div class="t" style="left:-223.61px;width:300px;text-align:right;top:95.32px;height:14px;line-height:14px;">263.00</div>
<div class="t b" style="left:80.26px;top:95.32px;height:14px;line-height:14px;">A</div>
<div class="t" style="left:-165.36px;width:300px;text-align:right;top:95.32px;height:14px;line-height:14px;">198.00</div>
<div class="t b" style="left:139.00px;top:95.32px;height:14px;line-height:14px;">Y</div>
<div class="t" style="left:-107.44px;width:300px;text-align:right;top:95.32px;height:14px;line-height:14px;">223.00</div>
<div class="t b" style="left:196.71px;top:95.32px;height:14px;line-height:14px;">B</div>
<div class="t" style="left:-49.19px;width:300px;text-align:right;top:95.32px;height:14px;line-height:14px;">198.00</div>
<div class="t b" style="left:254.13px;top:95.32px;height:14px;line-height:14px;">H</div>
<div class="t" style="left:9.00px;width:300px;text-align:right;top:95.32px;height:14px;line-height:14px;">173.00</div>
<div class="t b" style="left:312.39px;top:95.32px;height:14px;line-height:14px;">Q</div>
<div class="t" style="left:67.26px;width:300px;text-align:right;top:95.32px;height:14px;line-height:14px;">148.00</div>
<div class="t b" style="left:369.34px;top:95.32px;height:14px;line-height:14px;">M</div>
<div class="t" style="left:124.96px;width:300px;text-align:right;top:95.32px;height:14px;line-height:14px;">148.00</div>
<div style="left:2.01px;top:109.28px;width:691.90px;height:0.97px;background:#2a2aa0;">
</div>
<div style="left:2.01px;top:110.40px;width:691.90px;height:13.91px;background:#f3f3f9;">
</div>
<div class="t" style="left:2.21px;top:111.70px;height:14px;line-height:14px;">4</div>
<div class="t b" style="left:19.93px;top:111.25px;height:14px;line-height:14px;color:#e81c1c;font-size:12px;">*</div>
<div class="t b" style="left:34.25px;top:111.70px;height:14px;line-height:14px;">NK197</div>
<div class="t b" style="left:106.55px;top:111.70px;height:14px;line-height:14px;">LGA</div>
<div class="t b" style="left:150.97px;top:111.70px;height:14px;line-height:14px;">FLL</div>
<div class="t b" style="left:188.89px;top:111.70px;height:14px;line-height:14px;">Wed, 19Nov2003</div>
<div class="t b" style="left:75.42px;width:300px;text-align:right;top:111.70px;height:14px;line-height:14px;">12:30</div>
<div style="left:2.01px;top:124.76px;width:691.90px;height:15.72px;background:#ffffd2;">
</div>
<div style="left:19.72px;top:124.76px;width:0.90px;height:15.72px;background:#f4f4e6;">
</div>
<div style="left:77.56px;top:124.76px;width:0.83px;height:15.72px;background:#f0f0dc;">
</div>
<div style="left:136.30px;top:124.76px;width:0.83px;height:15.72px;background:#f0f0dc;">
</div>
<div style="left:194.01px;top:124.76px;width:0.83px;height:15.72px;background:#f0f0dc;">
</div>
<div style="left:251.44px;top:124.76px;width:0.83px;height:15.72px;background:#f0f0dc;">
</div>
<div style="left:309.69px;top:124.76px;width:0.83px;height:15.72px;background:#f0f0dc;">
</div>
<div style="left:366.64px;top:124.76px;width:0.83px;height:15.72px;background:#f0f0dc;">
</div>
<div class="t b" style="left:22.56px;top:126.51px;height:14px;line-height:14px;">C</div>
<div class="t" style="left:-223.61px;width:300px;text-align:right;top:126.51px;height:14px;line-height:14px;">263.00</div>
<div class="t b" style="left:80.26px;top:126.51px;height:14px;line-height:14px;">A</div>
<div class="t" style="left:-165.36px;width:300px;text-align:right;top:126.51px;height:14px;line-height:14px;">198.00</div>
<div class="t b" style="left:139.00px;top:126.51px;height:14px;line-height:14px;">Y</div>
<div class="t" style="left:-107.44px;width:300px;text-align:right;top:126.51px;height:14px;line-height:14px;">223.00</div>
<div class="t b" style="left:196.71px;top:126.51px;height:14px;line-height:14px;">B</div>
<div class="t" style="left:-49.19px;width:300px;text-align:right;top:126.51px;height:14px;line-height:14px;">198.00</div>
<div class="t b" style="left:254.13px;top:126.51px;height:14px;line-height:14px;">H</div>
<div class="t" style="left:9.00px;width:300px;text-align:right;top:126.51px;height:14px;line-height:14px;">173.00</div>
<div class="t b" style="left:312.39px;top:126.51px;height:14px;line-height:14px;">Q</div>
<div class="t" style="left:67.26px;width:300px;text-align:right;top:126.51px;height:14px;line-height:14px;">148.00</div>
<div class="t b" style="left:369.34px;top:126.51px;height:14px;line-height:14px;">M</div>
<div class="t" style="left:124.96px;width:300px;text-align:right;top:126.51px;height:14px;line-height:14px;">148.00</div>
<div style="left:2.01px;top:140.47px;width:691.90px;height:0.97px;background:#2a2aa0;">
</div>
<div style="left:2.01px;top:141.59px;width:691.90px;height:13.91px;background:#f3f3f9;">
</div>
<div class="t" style="left:2.21px;top:142.89px;height:14px;line-height:14px;">5</div>
<div class="t b" style="left:19.93px;top:142.44px;height:14px;line-height:14px;color:#e81c1c;font-size:12px;">*</div>
<div class="t b" style="left:34.25px;top:142.89px;height:14px;line-height:14px;">NK751</div>
<div class="t b" style="left:106.55px;top:142.89px;height:14px;line-height:14px;">LGA</div>
<div class="t b" style="left:150.97px;top:142.89px;height:14px;line-height:14px;">FLL</div>
<div class="t b" style="left:188.89px;top:142.89px;height:14px;line-height:14px;">Wed, 19Nov2003</div>
<div class="t b" style="left:75.42px;width:300px;text-align:right;top:142.89px;height:14px;line-height:14px;">15:15</div>
<div style="left:2.01px;top:155.95px;width:691.90px;height:15.72px;background:#ffffd2;">
</div>
<div style="left:19.72px;top:155.95px;width:0.90px;height:15.72px;background:#f4f4e6;">
</div>
<div style="left:77.56px;top:155.95px;width:0.83px;height:15.72px;background:#f0f0dc;">
</div>
<div style="left:136.30px;top:155.95px;width:0.83px;height:15.72px;background:#f0f0dc;">
</div>
<div style="left:194.01px;top:155.95px;width:0.83px;height:15.72px;background:#f0f0dc;">
</div>
<div style="left:251.44px;top:155.95px;width:0.83px;height:15.72px;background:#f0f0dc;">
</div>
<div style="left:309.69px;top:155.95px;width:0.83px;height:15.72px;background:#f0f0dc;">
</div>
<div style="left:366.64px;top:155.95px;width:0.83px;height:15.72px;background:#f0f0dc;">
</div>
<div style="left:2.01px;top:171.66px;width:691.90px;height:0.97px;background:#2a2aa0;">
</div>
</div>
<div class="btn" style="left:16.47px;top:517.23px;width:74.45px;height:21.08px;line-height:21.88px;">
<u>Q</u>uote...
</div>
<div class="btn" style="left:95.34px;top:517.23px;width:75.14px;height:21.08px;line-height:21.88px;">
Fares...
</div>
<div class="btn" style="left:175.47px;top:517.23px;width:75.14px;height:21.08px;line-height:21.88px;">
<u>D</u>etails...
</div>
<div class="btn" style="left:256.97px;top:517.23px;width:74.86px;height:21.08px;line-height:21.88px;">
<u>P</u>rint
</div>
<div class="win" style="left:398.95px;top:163.89px;width:590.47px;height:461.61px;">
</div>
<div class="cap" style="left:402.96px;top:166.58px;width:583.41px;height:22.43px;">
</div>
<div style="left:406.84px;top:169.57px;width:18px;height:16px;"><svg width="18" height="16" viewBox="0 0 18 16"><path d="M1.4,1.4 L1.4,11.4 L7.6,12 L8.4,13.4 L13.2,14 L13.2,4.6 L10,3.6 L8,2 Z" fill="#fff" stroke="#000" stroke-width="1.5" stroke-linejoin="round"/><path d="M3,2.6 L8,3.4 L10.5,4.8" fill="none" stroke="#3a5a58" stroke-width="1"/><rect x="15.4" y="11.6" width="1.3" height="1.3" fill="#222"/></svg></div>
<div class="t capt" style="left:429.81px;top:170.32px;height:16px;line-height:16px;">Passenger Manifest</div>
<div class="grp" style="left:411.40px;top:203.96px;width:565.83px;height:39.03px;">
</div>
<div class="t lbl" style="left:417.49px;top:199.13px;height:14px;line-height:14px;letter-spacing:-0.15px;">Filter</div>
<div class="t" style="left:426.62px;top:214.08px;height:14px;line-height:14px;letter-spacing:-0.15px;">Flight number:</div>
<div class="sunk" style="left:515.33px;top:213.38px;width:88.70px;height:18.54px;">
</div>
<div class="t" style="left:517.68px;top:216.78px;height:14px;line-height:14px;">NK709</div>
<div class="t" style="left:611.08px;top:214.08px;height:14px;line-height:14px;letter-spacing:-0.15px;">Flight date:</div>
<div class="sunk" style="left:692.04px;top:213.38px;width:77.35px;height:18.54px;">
</div>
<div class="t" style="left:694.67px;top:216.78px;height:14px;line-height:14px;">3</div>
<div class="grp" style="left:411.40px;top:258.39px;width:281.05px;height:128.15px;">
</div>
<div class="t lbl" style="left:417.35px;top:252.96px;height:14px;line-height:14px;font-size:11.6px;">NK709</div>
<div class="grp" style="left:698.82px;top:258.39px;width:209.23px;height:128.15px;">
</div>
<div class="radio " style="left:532.43px;top:267.50px;width:12px;height:12px;"><div class="ri" style="left:0;top:0;width:10px;height:10px;"></div></div>
<div class="t" style="left:549.78px;top:268.07px;height:14px;line-height:14px;">11</div>
<div style="left:468.41px;top:288.00px;width:136.30px;height:1.20px;background:#000;">
</div>
<div style="left:468.41px;top:288.00px;width:1.11px;height:7.78px;background:#000;">
</div>
<div style="left:603.61px;top:288.00px;width:1.11px;height:7.78px;background:#000;">
</div>
<div class="t" style="left:388.99px;width:300px;text-align:center;top:296.93px;height:14px;line-height:14px;">DTW</div>
<div class="t" style="left:317.72px;width:300px;text-align:center;top:304.25px;height:14px;line-height:14px;">LAX</div>
<div class="t" style="left:453.47px;width:300px;text-align:center;top:304.25px;height:14px;line-height:14px;">LGA</div>
<div class="t green" style="left:317.72px;width:300px;text-align:center;top:319.36px;height:14px;line-height:14px;">22:15</div>
<div class="t green" style="left:388.99px;width:300px;text-align:center;top:319.36px;height:14px;line-height:14px;">05:50/06:50</div>
<div class="t green" style="left:453.89px;width:300px;text-align:center;top:319.36px;height:14px;line-height:14px;">08:35</div>
<div class="radio " style="left:476.11px;top:334.93px;width:12px;height:12px;"><div class="ri" style="left:0;top:0;width:10px;height:10px;"></div></div>
<div class="t" style="left:492.77px;top:335.50px;height:14px;line-height:14px;">76</div>
<div class="radio " style="left:564.40px;top:334.93px;width:12px;height:12px;"><div class="ri" style="left:0;top:0;width:10px;height:10px;"></div></div>
<div class="t" style="left:581.61px;top:335.50px;height:14px;line-height:14px;">111</div>
<div style="left:468.41px;top:355.74px;width:47.74px;height:1.20px;background:#000;">
</div>
<div style="left:468.41px;top:349.31px;width:1.11px;height:7.63px;background:#000;">
</div>
<div style="left:515.05px;top:349.31px;width:1.11px;height:7.63px;background:#000;">
</div>
<div style="left:555.73px;top:355.74px;width:49.68px;height:1.20px;background:#000;">
</div>
<div style="left:555.73px;top:349.31px;width:1.11px;height:7.63px;background:#000;">
</div>
<div style="left:604.30px;top:349.31px;width:1.11px;height:7.63px;background:#000;">
</div>
<div class="radio " style="left:476.11px;top:365.29px;width:12px;height:12px;"><div class="ri" style="left:0;top:0;width:10px;height:10px;"><div class="dot" style="left:3px;top:3px;width:4px;height:4px;"></div></div></div>
<div class="t" style="left:492.77px;top:366.01px;height:14px;line-height:14px;">87</div>
<div class="radio " style="left:564.40px;top:365.29px;width:12px;height:12px;"><div class="ri" style="left:0;top:0;width:10px;height:10px;"></div></div>
<div class="t" style="left:581.61px;top:366.01px;height:14px;line-height:14px;">122</div>
<div style="left:411.68px;top:395.07px;width:287.14px;height:194.09px;background:#d7d7cf;overflow:hidden;box-shadow:inset 1px 1px 0 #808080;">
<div style="left:0.83px;top:0.90px;width:17.99px;height:16.15px;background:#d7d7cf;box-shadow:inset 1px 1px 0 #fff,inset -1px -1px 0 #808080;">
</div>
<div style="left:18.82px;top:0.90px;width:167.72px;height:16.15px;background:#d7d7cf;box-shadow:inset 1px 1px 0 #fff,inset -1px -1px 0 #808080;">
</div>
<div style="left:186.54px;top:0.90px;width:67.11px;height:16.15px;background:#d7d7cf;box-shadow:inset 1px 1px 0 #fff,inset -1px -1px 0 #808080;">
</div>
<div style="left:253.65px;top:0.90px;width:26.98px;height:16.15px;background:#d7d7cf;box-shadow:inset 1px 1px 0 #fff,inset -1px -1px 0 #808080;">
</div>
<div class="t" style="left:-57.98px;width:300px;text-align:center;top:3.54px;height:14px;line-height:14px;letter-spacing:-0.15px;">Passenger Name</div>
<div class="t" style="left:69.05px;width:300px;text-align:center;top:3.54px;height:14px;line-height:14px;letter-spacing:-0.15px;">Locator</div>
<div class="t" style="left:255.59px;top:3.54px;height:14px;line-height:14px;letter-spacing:-0.15px;">Cat.</div>
<div style="left:0.83px;top:17.05px;width:279.80px;height:17.00px;background:#141414;">
</div>
<div style="left:0.83px;top:17.72px;width:17.16px;height:15.81px;background:#d7d7cf;box-shadow:inset 1px 1px 0 #fff,inset -1px -1px 0 #808080;">
</div>
<div style="left:19.10px;top:17.72px;width:166.89px;height:15.81px;background:#ffffff;">
</div>
<div style="left:187.23px;top:17.72px;width:65.73px;height:15.81px;background:#ffffff;">
</div>
<div style="left:254.34px;top:17.72px;width:25.46px;height:15.81px;background:#ffffff;">
</div>
<div class="t" style="left:21.86px;top:21.09px;height:14px;line-height:14px;">AMBROSE/DANIEL</div>
<div class="t" style="left:188.33px;top:21.09px;height:14px;line-height:14px;">HLCJZT</div>
<div class="t" style="left:255.31px;top:21.09px;height:14px;line-height:14px;">S</div>
<div style="left:6.64px;top:21.29px;width:6.50px;height:10.47px;width:0;height:0;border-top:4.8px solid transparent;border-bottom:4.8px solid transparent;border-left:6.2px solid #000;">
</div>
<div style="left:0.83px;top:34.05px;width:279.80px;height:17.00px;background:#141414;">
</div>
<div style="left:0.83px;top:34.72px;width:17.16px;height:15.81px;background:#d7d7cf;box-shadow:inset 1px 1px 0 #fff,inset -1px -1px 0 #808080;">
</div>
<div style="left:19.10px;top:34.72px;width:166.89px;height:15.81px;background:#fdfde9;">
</div>
<div style="left:187.23px;top:34.72px;width:65.73px;height:15.81px;background:#fdfde9;">
</div>
<div style="left:254.34px;top:34.72px;width:25.46px;height:15.81px;background:#fdfde9;">
</div>
<div class="t" style="left:21.86px;top:38.09px;height:14px;line-height:14px;">BAGHDASARIAN/NERSIS</div>
<div class="t" style="left:188.33px;top:38.09px;height:14px;line-height:14px;">HLKCJZ</div>
<div class="t" style="left:255.31px;top:38.09px;height:14px;line-height:14px;">S</div>
<div style="left:0.83px;top:51.05px;width:279.80px;height:17.00px;background:#141414;">
</div>
<div style="left:0.83px;top:51.72px;width:17.16px;height:15.81px;background:#d7d7cf;box-shadow:inset 1px 1px 0 #fff,inset -1px -1px 0 #808080;">
</div>
<div style="left:19.10px;top:51.72px;width:166.89px;height:15.81px;background:#ffffff;">
</div>
<div style="left:187.23px;top:51.72px;width:65.73px;height:15.81px;background:#ffffff;">
</div>
<div style="left:254.34px;top:51.72px;width:25.46px;height:15.81px;background:#ffffff;">
</div>
<div class="t" style="left:21.86px;top:55.09px;height:14px;line-height:14px;">BARARSANI/NIMA</div>
<div class="t" style="left:188.33px;top:55.09px;height:14px;line-height:14px;">HKGFXV</div>
<div class="t" style="left:255.31px;top:55.09px;height:14px;line-height:14px;">S</div>
<div style="left:0.83px;top:68.05px;width:279.80px;height:17.00px;background:#141414;">
</div>
<div style="left:0.83px;top:68.73px;width:17.16px;height:15.81px;background:#d7d7cf;box-shadow:inset 1px 1px 0 #fff,inset -1px -1px 0 #808080;">
</div>
<div style="left:19.10px;top:68.73px;width:166.89px;height:15.81px;background:#fdfde9;">
</div>
<div style="left:187.23px;top:68.73px;width:65.73px;height:15.81px;background:#fdfde9;">
</div>
<div style="left:254.34px;top:68.73px;width:25.46px;height:15.81px;background:#fdfde9;">
</div>
<div class="t" style="left:21.86px;top:72.10px;height:14px;line-height:14px;">BECK/DAVID</div>
<div class="t" style="left:188.33px;top:72.10px;height:14px;line-height:14px;">HKKFQP</div>
<div class="t" style="left:255.31px;top:72.10px;height:14px;line-height:14px;">S</div>
<div style="left:0.83px;top:85.05px;width:279.80px;height:17.00px;background:#141414;">
</div>
<div style="left:0.83px;top:85.73px;width:17.16px;height:15.81px;background:#d7d7cf;box-shadow:inset 1px 1px 0 #fff,inset -1px -1px 0 #808080;">
</div>
<div style="left:19.10px;top:85.73px;width:166.89px;height:15.81px;background:#ffffff;">
</div>
<div style="left:187.23px;top:85.73px;width:65.73px;height:15.81px;background:#ffffff;">
</div>
<div style="left:254.34px;top:85.73px;width:25.46px;height:15.81px;background:#ffffff;">
</div>
<div class="t" style="left:21.86px;top:89.10px;height:14px;line-height:14px;">BERBERIAN/ARA</div>
<div class="t" style="left:188.33px;top:89.10px;height:14px;line-height:14px;">HKZNHD</div>
<div class="t" style="left:255.31px;top:89.10px;height:14px;line-height:14px;">S</div>
<div style="left:0.83px;top:102.06px;width:279.80px;height:17.00px;background:#141414;">
</div>
<div style="left:0.83px;top:102.73px;width:17.16px;height:15.81px;background:#d7d7cf;box-shadow:inset 1px 1px 0 #fff,inset -1px -1px 0 #808080;">
</div>
<div style="left:19.10px;top:102.73px;width:166.89px;height:15.81px;background:#fdfde9;">
</div>
<div style="left:187.23px;top:102.73px;width:65.73px;height:15.81px;background:#fdfde9;">
</div>
<div style="left:254.34px;top:102.73px;width:25.46px;height:15.81px;background:#fdfde9;">
</div>
<div class="t" style="left:21.86px;top:106.10px;height:14px;line-height:14px;">BLACK/JESSERAY</div>
<div class="t" style="left:188.33px;top:106.10px;height:14px;line-height:14px;">HKZFTV</div>
<div class="t" style="left:255.31px;top:106.10px;height:14px;line-height:14px;">S</div>
<div style="left:0.83px;top:119.06px;width:279.80px;height:17.00px;background:#141414;">
</div>
<div style="left:0.83px;top:119.73px;width:17.16px;height:15.81px;background:#d7d7cf;box-shadow:inset 1px 1px 0 #fff,inset -1px -1px 0 #808080;">
</div>
<div style="left:19.10px;top:119.73px;width:166.89px;height:15.81px;background:#ffffff;">
</div>
<div style="left:187.23px;top:119.73px;width:65.73px;height:15.81px;background:#ffffff;">
</div>
<div style="left:254.34px;top:119.73px;width:25.46px;height:15.81px;background:#ffffff;">
</div>
<div class="t" style="left:21.86px;top:123.10px;height:14px;line-height:14px;">BLACK/THOMASCOLBY</div>
<div class="t" style="left:188.33px;top:123.10px;height:14px;line-height:14px;">HKZFTV</div>
<div class="t" style="left:255.31px;top:123.10px;height:14px;line-height:14px;">S</div>
<div style="left:0.83px;top:136.06px;width:279.80px;height:17.00px;background:#141414;">
</div>
<div style="left:0.83px;top:136.73px;width:17.16px;height:15.81px;background:#d7d7cf;box-shadow:inset 1px 1px 0 #fff,inset -1px -1px 0 #808080;">
</div>
<div style="left:19.10px;top:136.73px;width:166.89px;height:15.81px;background:#fdfde9;">
</div>
<div style="left:187.23px;top:136.73px;width:65.73px;height:15.81px;background:#fdfde9;">
</div>
<div style="left:254.34px;top:136.73px;width:25.46px;height:15.81px;background:#fdfde9;">
</div>
<div class="t" style="left:21.86px;top:140.10px;height:14px;line-height:14px;">CAMERO/LOUIS</div>
<div class="t" style="left:188.33px;top:140.10px;height:14px;line-height:14px;">HKWXXJ</div>
<div class="t" style="left:255.31px;top:140.10px;height:14px;line-height:14px;">S</div>
<div style="left:0.83px;top:153.06px;width:279.80px;height:17.00px;background:#141414;">
</div>
<div style="left:0.83px;top:153.73px;width:17.16px;height:15.81px;background:#d7d7cf;box-shadow:inset 1px 1px 0 #fff,inset -1px -1px 0 #808080;">
</div>
<div style="left:19.10px;top:153.73px;width:166.89px;height:15.81px;background:#ffffff;">
</div>
<div style="left:187.23px;top:153.73px;width:65.73px;height:15.81px;background:#ffffff;">
</div>
<div style="left:254.34px;top:153.73px;width:25.46px;height:15.81px;background:#ffffff;">
</div>
<div class="t" style="left:21.86px;top:157.10px;height:14px;line-height:14px;">CHEN/LI</div>
<div class="t" style="left:188.33px;top:157.10px;height:14px;line-height:14px;">HKLMTM</div>
<div class="t" style="left:255.31px;top:157.10px;height:14px;line-height:14px;">S</div>
<div style="left:0.83px;top:170.06px;width:279.80px;height:17.00px;background:#141414;">
</div>
<div style="left:0.83px;top:170.74px;width:17.16px;height:15.81px;background:#d7d7cf;box-shadow:inset 1px 1px 0 #fff,inset -1px -1px 0 #808080;">
</div>
<div style="left:19.10px;top:170.74px;width:166.89px;height:15.81px;background:#fdfde9;">
</div>
<div style="left:187.23px;top:170.74px;width:65.73px;height:15.81px;background:#fdfde9;">
</div>
<div style="left:254.34px;top:170.74px;width:25.46px;height:15.81px;background:#fdfde9;">
</div>
<div class="t" style="left:21.86px;top:174.11px;height:14px;line-height:14px;">CZEWSKI/RACHEL A</div>
<div class="t" style="left:188.33px;top:174.11px;height:14px;line-height:14px;">HLJNBP</div>
<div class="t" style="left:255.31px;top:174.11px;height:14px;line-height:14px;">S</div>
<div style="left:0.83px;top:187.07px;width:279.80px;height:17.00px;background:#141414;">
</div>
<div style="left:0.83px;top:187.74px;width:17.16px;height:15.81px;background:#d7d7cf;box-shadow:inset 1px 1px 0 #fff,inset -1px -1px 0 #808080;">
</div>
<div style="left:19.10px;top:187.74px;width:166.89px;height:15.81px;background:#ffffff;">
</div>
<div style="left:187.23px;top:187.74px;width:65.73px;height:15.81px;background:#ffffff;">
</div>
<div style="left:254.34px;top:187.74px;width:25.46px;height:15.81px;background:#ffffff;">
</div>
<div class="t" style="left:21.86px;top:191.11px;height:14px;line-height:14px;">D AGOSTINI/JUSTINA</div>
<div class="t" style="left:188.33px;top:191.11px;height:14px;line-height:14px;">HKHHLJ</div>
<div class="t" style="left:255.31px;top:191.11px;height:14px;line-height:14px;">S</div>
</div>
<div class="t" style="left:410.71px;top:598.38px;height:14px;line-height:14px;letter-spacing:-0.15px;">Rows:</div>
<div class="t" style="left:466.62px;top:598.38px;height:14px;line-height:14px;">87</div>
<div style="left:957.86px;top:398.95px;width:18.27px;height:190.21px;background:#e9e9e4;">
</div>
<div class="btn" style="left:958.69px;top:573.76px;width:17.44px;height:15.40px;">
<div class="arr" style="left:5.2px;top:5.4px;"></div>
</div>
<div class="btn" style="left:662.56px;top:597.83px;width:75.28px;height:19.89px;line-height:20.69px;">
<u>P</u>rint
</div>
<div class="btn" style="left:742.41px;top:597.83px;width:75.69px;height:19.89px;line-height:20.69px;">
C<u>l</u>ear
</div>
<div class="btnd" style="left:822.94px;top:597.83px;width:75.14px;height:19.89px;line-height:20.69px;">
<u>S</u>earch
</div>
<div class="btn" style="left:902.93px;top:597.83px;width:75.83px;height:19.89px;line-height:20.69px;">
<u>C</u>lose
</div>
<div style="left:97.83px;top:480.15px;width:12px;height:20px;"><svg width="12" height="20" viewBox="0 0 12 20"><path d="M0.6,0.8 L0.6,15.6 L4,12.4 L6.6,18.6 L8.8,17.6 L6.2,11.6 L10.8,11.6 Z" fill="#fff" stroke="#000" stroke-width="1"/></svg></div>
<div class="win" style="left:701.58px;top:64.00px;width:322.63px;height:410.62px;background:#fff;">
</div>
<div class="cap" style="left:703.94px;top:65.94px;width:318.41px;height:24.07px;background:linear-gradient(90deg,#808080 0%,#8c8c8c 30%,#c8c8c8 100%);">
</div>
<div style="left:708.50px;top:69.53px;width:18px;height:16px;"><svg width="18" height="16" viewBox="0 0 18 16"><path d="M1.4,1.4 L1.4,11.4 L7.6,12 L8.4,13.4 L13.2,14 L13.2,4.6 L10,3.6 L8,2 Z" fill="#fff" stroke="#000" stroke-width="1.5" stroke-linejoin="round"/><path d="M3,2.6 L8,3.4 L10.5,4.8" fill="none" stroke="#3a5a58" stroke-width="1"/><rect x="15.4" y="11.6" width="1.3" height="1.3" fill="#222"/></svg></div>
<div class="t capt" style="left:730.51px;top:70.28px;height:16px;line-height:16px;">AboutTASAR</div>
<div class="btn" style="left:995.36px;top:68.04px;width:22.97px;height:19.74px;">
<svg style="position:absolute;left:4.8px;top:3.2px" width="14" height="13" viewBox="0 0 14 13"><path d="M1.2,1.2 L12.6,11.8 M12.6,1.2 L1.2,11.8" stroke="#000" stroke-width="2.1"/></svg>
</div>
<div class="t" style="left:731.20px;top:110.28px;height:32px;line-height:32px;font-size:26.6px;color:#1b2160;letter-spacing:2.3px;-webkit-text-stroke:0.45px #1b2160;">TASAR</div>
<div class="t" style="left:731.06px;top:148.74px;height:14px;line-height:14px;letter-spacing:-0.15px;">Version 1.0.234</div>
<div class="t" style="left:730.92px;top:175.55px;height:16px;line-height:16px;font-size:13px;letter-spacing:-0.06px;">Copyright (c) 2003 RRT Ltd</div>
<div class="t" style="left:731.06px;top:205.11px;height:14px;line-height:14px;letter-spacing:-0.15px;">The World's First Airline Reservation System based on a</div>
<div class="t" style="left:731.06px;top:217.67px;height:14px;line-height:14px;letter-spacing:-0.15px;">three-tiered network design concept</div>
<div class="t b" style="left:731.06px;top:234.72px;height:14px;line-height:14px;">This product is licensed to:</div>
<div class="t" style="left:731.06px;top:249.82px;height:14px;line-height:14px;letter-spacing:-0.15px;">Spirit Airlines</div>
<div class="t" style="left:735.35px;top:280.18px;height:14px;line-height:14px;letter-spacing:-0.15px;">Visit our web site at: <span style="text-decoration:underline;text-underline-offset:1.5px;letter-spacing:0.1px;">www.RRTechnologies.net</span></div>
<div class="grpw" style="left:735.90px;top:307.29px;width:272.75px;height:51.89px;">
</div>
<div class="t lblw" style="left:742.13px;top:302.01px;height:14px;line-height:14px;letter-spacing:-0.15px;">Login information</div>
<div class="t" style="left:745.31px;top:321.30px;height:14px;line-height:14px;letter-spacing:-0.15px;">User:</div>
<div class="t" style="left:801.36px;top:321.30px;height:14px;line-height:14px;">PETER</div>
<div class="t" style="left:863.49px;top:321.30px;height:14px;line-height:14px;letter-spacing:-0.15px;">City:</div>
<div class="t" style="left:919.53px;top:321.30px;height:14px;line-height:14px;">FLL</div>
<div class="t" style="left:743.65px;top:336.55px;height:14px;line-height:14px;letter-spacing:-0.15px;">Company:</div>
<div class="t" style="left:799.56px;top:336.55px;height:14px;line-height:14px;">NK</div>
<div class="t" style="left:863.49px;top:337.60px;height:14px;line-height:14px;letter-spacing:-0.15px;">Branch:</div>
<div class="t" style="left:919.53px;top:337.60px;height:14px;line-height:14px;">0001</div>
<div class="grpw" style="left:735.90px;top:367.70px;width:272.75px;height:69.68px;">
</div>
<div class="t lblw" style="left:742.13px;top:362.57px;height:14px;line-height:14px;letter-spacing:-0.15px;">Groups</div>
<div style="left:744.21px;top:377.57px;width:256.42px;height:50.99px;background:#fff;box-shadow:inset 1px 1px 0 #808080,inset 2px 2px 0 #404040,inset -1px -1px 0 #e4e4e0;">
</div>
<div class="t" style="left:747.53px;top:379.92px;height:14px;line-height:14px;letter-spacing:-0.15px;">Administrators</div>
<div class="btnd" style="left:822.39px;top:445.31px;width:85.93px;height:19.29px;line-height:20.09px;">
<u>O</u>K
</div>
<div class="face" style="left:0.00px;top:635.51px;width:1024.01px;height:19.44px;box-shadow:inset 0 1px 0 #fff;">
</div>
<div class="sp" style="left:0.97px;top:639.40px;width:444.20px;height:14.06px;">
</div>
<div class="sp" style="left:447.66px;top:639.40px;width:94.93px;height:14.06px;">
</div>
<div class="sp" style="left:545.22px;top:639.40px;width:94.93px;height:14.06px;">
</div>
<div class="sp" style="left:642.77px;top:639.40px;width:94.37px;height:14.06px;">
</div>
<div class="sp" style="left:739.50px;top:639.40px;width:131.05px;height:14.06px;">
</div>
<div class="sp" style="left:873.59px;top:639.40px;width:65.04px;height:14.06px;">
</div>
<div class="sp" style="left:941.40px;top:639.40px;width:65.45px;height:14.06px;">
</div>
<div class="t st" style="left:743.24px;top:641.00px;height:14px;line-height:14px;">PRODUCTION</div>
<div class="t st" style="left:877.74px;top:641.00px;height:14px;line-height:14px;letter-spacing:0.62px;">11/19/2003</div>
<div class="t st" style="left:946.10px;top:641.00px;height:14px;line-height:14px;">4:26 PM</div>
</div>
</body></html>
